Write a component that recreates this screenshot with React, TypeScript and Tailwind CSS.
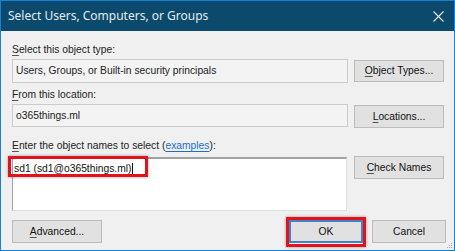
import React from "react";

const btn =
  "flex items-center justify-center bg-[#e1e1e1] border border-[#bcbcbc] text-[#111] text-[10.3px]";

function Mn({ c, rest }: { c: string; rest: string }) {
  return (
    <span>
      <span className="underline decoration-[#555] underline-offset-2">{c}</span>
      {rest}
    </span>
  );
}

export default function App() {
  return (
    <div
      className="w-[455px] h-[251px] bg-[#f0f0f0] border border-[#1a7fd6] flex flex-col relative overflow-hidden"
      style={{ fontFamily: '"Liberation Sans", Arial, sans-serif' }}
    >
      {/* title bar */}
      <div className="h-[30px] bg-[#0b4a6c] flex items-center justify-between pl-[7px] pr-[10px] shrink-0">
        <span
          className="text-[#e4eaee] text-[12px]"
          style={{ fontFamily: '"Noto Sans", "Open Sans", sans-serif' }}
        >
          Select Users, Computers, or Groups
        </span>
        <svg width="11" height="11" viewBox="0 0 11 11">
          <path d="M0.5 0.5L10.5 10.5M10.5 0.5L0.5 10.5" stroke="#e4eaee" strokeWidth="1.1" />
        </svg>
      </div>

      <div className="flex flex-col pl-[11px] pt-[12px] text-[10.3px] text-[#222]">
        <div className="h-[14px] leading-[14px]">
          <Mn c="S" rest="elect this object type:" />
        </div>
        <div className="mt-[2px] h-[24px] flex items-center gap-[6px]">
          <div className="w-[336px] h-[24px] border border-[#cbcbcb] bg-[#f3f3f3] flex items-center pl-[3px]">
            Users, Groups, or Built-in security principals
          </div>
          <div className={btn + " w-[90px] h-[22px]"}>
            <Mn c="O" rest="bject Types..." />
          </div>
        </div>

        <div className="mt-[5px] h-[14px] leading-[14px]">
          <Mn c="F" rest="rom this location:" />
        </div>
        <div className="mt-[2px] h-[24px] flex gap-[6px]">
          <div className="w-[336px] h-[23px] border border-[#cbcbcb] bg-[#f3f3f3] flex items-center pl-[3px]">
            o365things.ml
          </div>
          <div className={btn + " w-[90px] h-[23px] mt-[1px]"}>
            <Mn c="L" rest="ocations..." />
          </div>
        </div>

        <div className="mt-[11px] h-[14px] leading-[14px]">
          <Mn c="E" rest="nter the object names to select (" />
          <span className="text-[#1a6fc9] underline underline-offset-2">examples</span>
          <span>):</span>
        </div>
        <div className="mt-[3px] flex items-start gap-[7px]">
          <div className="relative w-[335px] h-[54px] mt-[1px] bg-white border-t-2 border-l border-[#a2a2a2] border-r border-b border-r-[#dedede] border-b-[#dedede]">
            <div className="absolute left-[1px] top-[3px] flex items-center h-[14px]">
              <span className="underline decoration-[#444] underline-offset-2 text-[#111]">
                sd1 (sd1@o365things.ml)
              </span>
              <span className="w-px h-[13px] bg-[#111] ml-px" />
            </div>
            <div className="absolute left-[-5px] top-[-3px] w-[140px] h-[21px] border-[3px] border-[#e3121b] shadow-[0_0_3px_rgba(0,0,0,0.35)]" />
          </div>
          <div className={btn + " w-[90px] h-[23px]"}>
            <Mn c="C" rest="heck Names" />
          </div>
        </div>

        <div className="mt-[9px] h-[23px] flex">
          <div className={btn + " w-[90px] h-[23px]"}>
            <Mn c="A" rest="dvanced..." />
          </div>
          <div className="relative ml-[187px] w-[74px] h-[23px]">
            <div className="absolute left-[-3px] top-[-3px] right-[-3px] bottom-[-4px] border-[3px] border-[#e3121b] shadow-[0_0_3px_rgba(0,0,0,0.35)]" />
            <div className="w-[74px] h-[23px] flex items-center justify-center bg-[#e1e1e1] border-2 border-[#3f83c4] text-[#111] text-[10.3px]">
              OK
            </div>
          </div>
          <div className={btn + " w-[74px] h-[23px] ml-[9px]"}>Cancel</div>
        </div>
      </div>

      {/* resize grip */}
      <svg className="absolute right-[1px] bottom-[1px]" width="8" height="8" viewBox="0 0 8 8">
        <rect x="6" y="2" width="1" height="1" fill="#a8a8a8" />
        <rect x="4" y="4" width="1" height="1" fill="#a8a8a8" />
        <rect x="6" y="4" width="1" height="1" fill="#a8a8a8" />
        <rect x="2" y="6" width="1" height="1" fill="#a8a8a8" />
        <rect x="4" y="6" width="1" height="1" fill="#a8a8a8" />
        <rect x="6" y="6" width="1" height="1" fill="#a8a8a8" />
      </svg>
    </div>
  );
}
